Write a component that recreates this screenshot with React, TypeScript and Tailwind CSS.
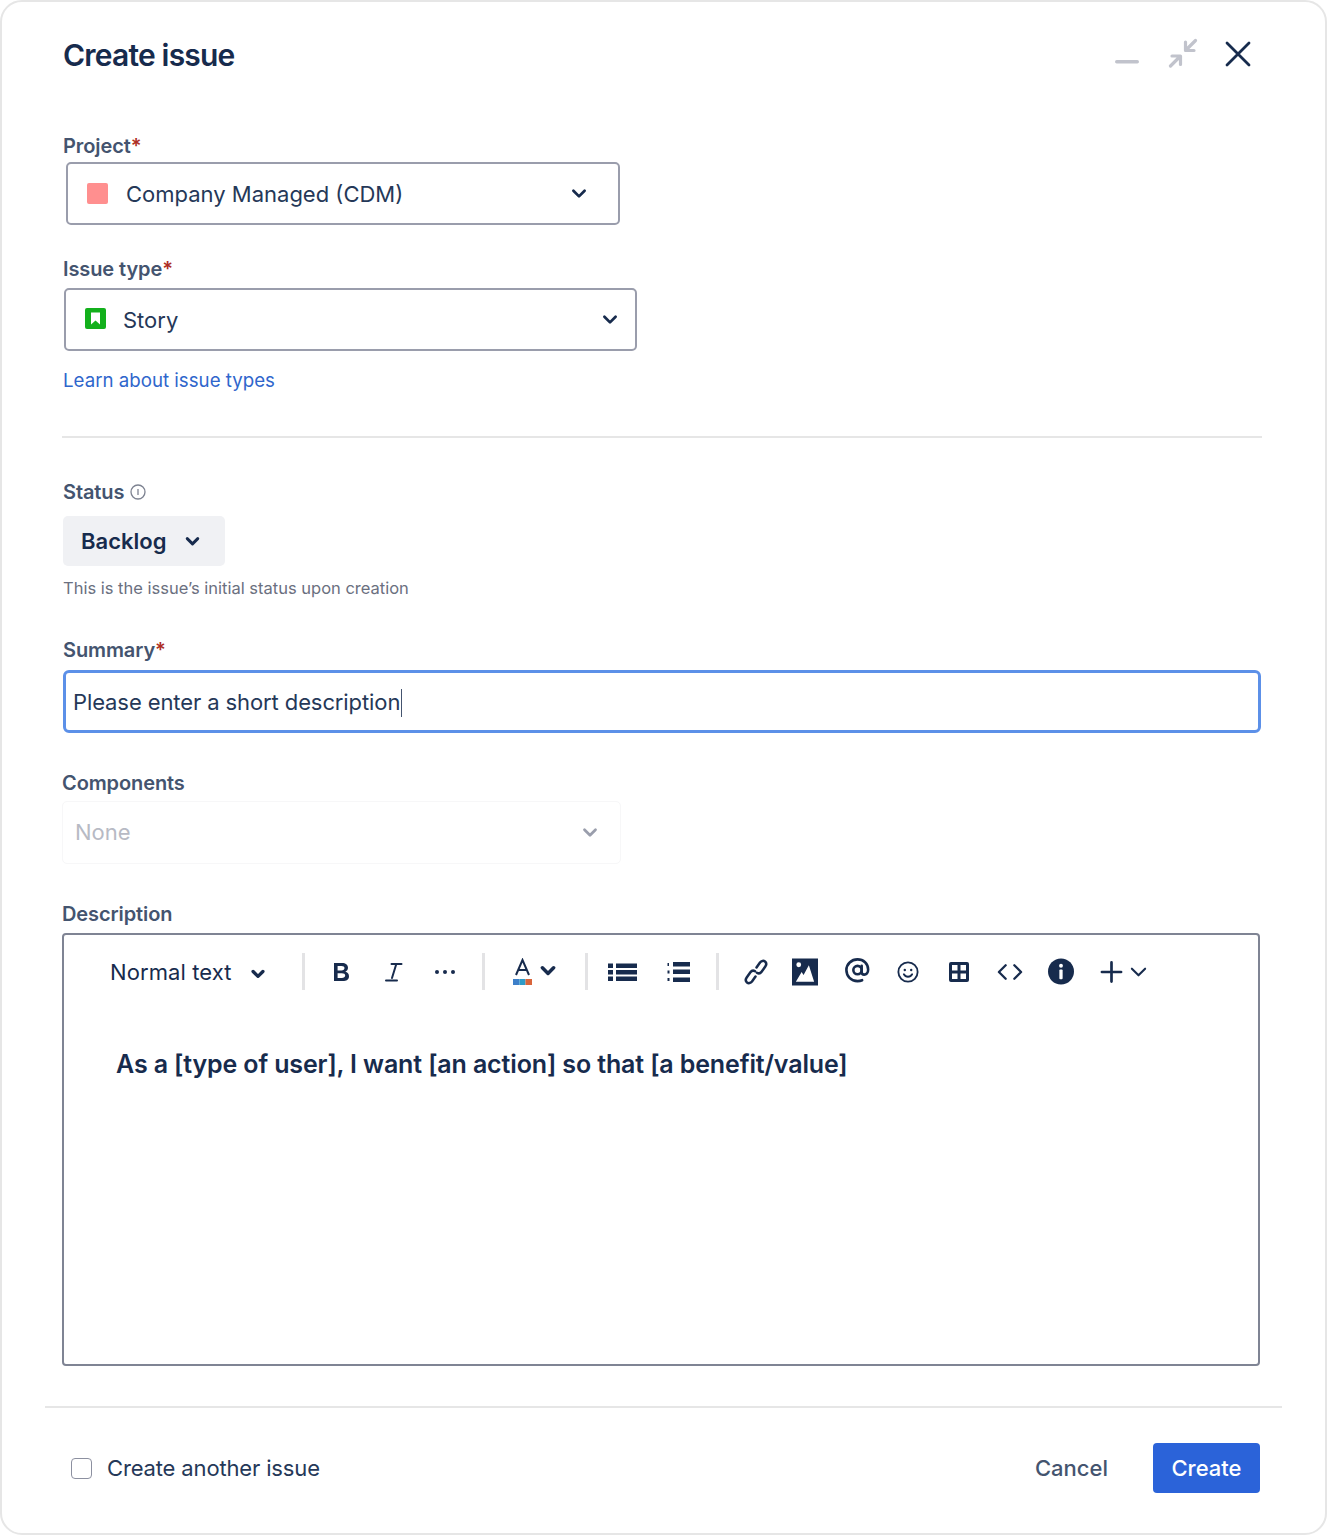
import React from "react";

const navy = "#172B4D";

function Chevron({ w = 14, sw = 3 }: { w?: number; sw?: number }) {
  return (
    <svg width={w} height={w * 0.7} viewBox="0 0 14 10" fill="none" stroke={navy} strokeWidth={sw * 14 / w} strokeLinecap="round" strokeLinejoin="round">
      <path d="M2 2.500 7 7.500l5-5" />
    </svg>
  );
}

function Label({ children, req }: { children: React.ReactNode; req?: boolean }) {
  return (
    <div className="h-6 pb-px flex items-center text-[20px] leading-6 font-semibold text-[#44546F] tracking-[-0.1px]">
      {children}
      {req && <span className="text-[#AE2E24]">*</span>}
    </div>
  );
}

function Sep({ ml }: { ml: string }) {
  return <div className={`w-[3px] h-[37px] bg-[#E3E3E5] shrink-0 ${ml}`} />;
}

function Toolbar() {
  return (
    <div className="h-[37px] flex items-center pl-[46px] mt-[18px]">
      <span className="text-[22px] leading-7 tracking-[0.1px] text-[#172B4D] w-[122px] whitespace-nowrap">Normal text</span>
      <div className="ml-[19px] mt-1 shrink-0"><Chevron w={14} sw={3.4} /></div>
      <Sep ml="ml-[37px]" />
      <svg className="ml-[28px] shrink-0" width="17" height="20" viewBox="0 0 17 20" fill={navy}>
        <path fillRule="evenodd" d="M1 1h8c3.600 0 6 1.700 6 4.800 0 1.900-1.100 3.300-2.700 3.900 2.200.5 3.700 2.100 3.700 4.500 0 3.300-2.600 4.800-6.200 4.800H1V1Zm3.600 3v4.400h3.900c1.900 0 3-.8 3-2.300 0-1.400-1.100-2.100-3-2.100H4.600Zm0 7.300V16h4.200c2 0 3.400-.8 3.400-2.400 0-1.500-1.400-2.300-3.400-2.300H4.600Z" />
      </svg>
      <svg className="ml-[35px] shrink-0" width="18" height="20" viewBox="0 0 18 20" fill="none" stroke={navy} strokeWidth="2" strokeLinecap="round">
        <path d="M6.500 2h10M11.300 2 7 16M1 18.500h11" />
      </svg>
      <svg className="ml-[31px] shrink-0" width="22" height="6" viewBox="0 0 22 6" fill={navy}>
        <circle cx="3" cy="3" r="2" />
        <circle cx="11" cy="3" r="2" />
        <circle cx="19" cy="3" r="2" />
      </svg>
      <Sep ml="ml-[26px]" />
      <svg className="ml-[27px] shrink-0" width="21" height="27" viewBox="0 0 21 27">
        <path d="M4 17 10.500 2 17 17M6.200 12h8.600" fill="none" stroke={navy} strokeWidth="2" />
        <rect x="1" y="21" width="6.500" height="6" fill="#3D7FC9" />
        <rect x="7.500" y="21" width="6" height="6" fill="#2D9CC8" />
        <rect x="13.500" y="21" width="6.500" height="6" fill="#D9653B" />
      </svg>
      <div className="ml-[7px] shrink-0 mb-0.5"><Chevron w={16} sw={3.6} /></div>
      <Sep ml="ml-[29px]" />
      <svg className="ml-[20px] shrink-0" width="30" height="20" viewBox="0 0 30 20" fill={navy}>
        <rect x="0" y="1.500" width="5" height="4.500" />
        <rect x="0" y="8" width="5" height="4.500" />
        <rect x="0" y="14.500" width="5" height="4.500" />
        <rect x="8" y="1.500" width="21" height="4.500" />
        <rect x="8" y="8" width="21" height="4.500" />
        <rect x="8" y="14.500" width="21" height="4.500" />
      </svg>
      <svg className="ml-[29px] shrink-0" width="24" height="24" viewBox="0 0 24 24" fill={navy}>
        <rect x="0.500" y="3" width="1.500" height="3" />
        <rect x="0.500" y="10.500" width="2" height="3" />
        <rect x="0.500" y="18" width="2" height="3" />
        <rect x="6" y="2" width="17" height="4.500" />
        <rect x="6" y="9.500" width="17" height="4.500" />
        <rect x="6" y="17.500" width="17" height="4.500" />
      </svg>
      <Sep ml="ml-[25px]" />
      <svg className="ml-[25px] shrink-0" width="24" height="26" viewBox="0 0 24 26" fill="none" stroke={navy} strokeWidth="2.500" strokeLinecap="round">
        <path d="M12.500 8.500 16 3.500c1.400-1.800 3.600-2.100 5-1 1.400 1.200 1.500 3.300.3 5l-3.700 5.200c-1.300 1.800-3.200 2-4.700 1" />
        <path d="M11.500 17.500 8 22.500c-1.400 1.800-3.600 2.100-5 1-1.400-1.200-1.500-3.300-.3-5l3.700-5.200c1.300-1.800 3.200-2 4.700-1" />
      </svg>
      <svg className="ml-[24px] shrink-0" width="26" height="28" viewBox="0 0 27 28" fill={navy}>
        <path fillRule="evenodd" d="M0 0h27v28H0V0Zm7 4a2.500 2.500 0 1 0 0 5 2.500 2.500 0 0 0 0-5Zm10.500 3L12 17l-2-3-6 10h19L17.500 7Z" />
      </svg>
      <svg className="ml-[27px] mb-[3px] shrink-0" width="25" height="25" viewBox="0 0 27 27" fill="none" stroke={navy} strokeWidth="2.800" strokeLinecap="round">
        <circle cx="13.500" cy="13" r="4.500" />
        <path d="M18 8.500v6.500c0 2 1 3 2.700 3 2.300 0 4.300-2 4.300-5.500C25 6 20 1.500 13.500 1.500S1.500 6.500 1.500 13s5 12 12 12c2 0 3.500-.3 5-1" />
      </svg>
      <svg className="ml-[27px] shrink-0" width="22" height="22" viewBox="0 0 24 24" fill="none" stroke={navy} strokeWidth="2">
        <circle cx="12" cy="12" r="10.500" />
        <circle cx="8.500" cy="9.800" r="1.300" fill={navy} stroke="none" />
        <circle cx="15.500" cy="9.800" r="1.300" fill={navy} stroke="none" />
        <path d="M7.500 14.500c1 1.800 2.700 2.700 4.500 2.700s3.500-.9 4.500-2.700" strokeLinecap="round" />
      </svg>
      <svg className="ml-[30px] shrink-0" width="20" height="20" viewBox="0 0 20 20" fill={navy}>
        <path fillRule="evenodd" d="M2 0h16a2 2 0 0 1 2 2v16a2 2 0 0 1-2 2H2a2 2 0 0 1-2-2V2a2 2 0 0 1 2-2Zm1 3v5.500h5.500V3H3Zm8.500 0v5.500H17V3h-5.500ZM3 11.500V17h5.500v-5.500H3Zm8.500 0V17H17v-5.500h-5.500Z" />
      </svg>
      <svg className="ml-[28px] shrink-0" width="26" height="20" viewBox="0 0 27 20" fill="none" stroke={navy} strokeWidth="2.400" strokeLinecap="round" strokeLinejoin="round">
        <path d="M9 3 2 10l7 7M18 3l7 7-7 7" />
      </svg>
      <svg className="ml-[25px] shrink-0" width="26" height="27" viewBox="0 0 27 27">
        <circle cx="13.500" cy="13.500" r="13.500" fill={navy} />
        <circle cx="13.500" cy="7.500" r="2" fill="#fff" />
        <rect x="11.800" y="11.500" width="3.400" height="10" rx="1" fill="#fff" />
      </svg>
      <svg className="ml-[26px] shrink-0" width="23" height="24" viewBox="0 0 24 24" fill="none" stroke={navy} strokeWidth="2.800" strokeLinecap="round">
        <path d="M12 2v20M2 12h20" />
      </svg>
      <svg className="ml-[7px] shrink-0" width="17" height="12" viewBox="0 0 18 12" fill="none" stroke={navy} strokeWidth="2.200" strokeLinecap="round" strokeLinejoin="round">
        <path d="M2 2.500 9 9.500l7-7" />
      </svg>
    </div>
  );
}

export default function App() {
  return (
    <div className="w-[1327px] h-[1535px] bg-white border-2 border-[#E6E6E6] rounded-[22px] font-['Inter','Liberation_Sans',sans-serif] text-[#172B4D] overflow-hidden flex flex-col">
      <header className="h-[132px] shrink-0 flex justify-between pl-[61px] pr-[74px]">
        <h1 className="mt-[33px] h-10 text-[30px] leading-10 font-semibold tracking-[-0.8px] text-[#172B4D]">Create issue</h1>
        <div className="flex items-start pt-[36px] gap-[27px]">
          <svg className="mt-[22px] mr-[2px]" width="24" height="4" viewBox="0 0 24 4"><rect width="24" height="3.400" rx="1.700" fill="#C1C3CC" /></svg>
          <svg width="30" height="30" viewBox="0 0 30 30" fill="none" stroke="#C1C3CC" strokeWidth="3.200" strokeLinecap="round" strokeLinejoin="round">
            <path d="M27.500 2.500 18 12M17.500 4v8.500H26" />
            <path d="M2.500 28 12 18.500M4 18h8.500v8.500" />
          </svg>
          <svg className="mt-[3px]" width="26" height="26" viewBox="0 0 26 26" fill="none" stroke={navy} strokeWidth="2.800" strokeLinecap="round">
            <path d="M2 2l22 22M24 2 2 24" />
          </svg>
        </div>
      </header>

      <main className="pl-[61px] pr-[65px] flex flex-col">
        <Label req>Project</Label>
        <div className="ml-[3px] mt-[4px] w-[554px] h-[63px] border-2 border-[#9A9DAC] rounded-[5px] flex items-center pl-[19px] pr-[31px]">
          <div className="w-[21px] h-[21px] bg-[#FF8F8F] rounded-[2px] shrink-0" />
          <span className="ml-[18px] text-[22px] leading-8 text-[#253858] whitespace-nowrap">Company Managed (CDM)</span>
          <div className="ml-auto"><Chevron w={16} sw={2.8} /></div>
        </div>

        <div className="mt-[32px]"><Label req>Issue type</Label></div>
        <div className="ml-[1px] mt-[7px] w-[573px] h-[63px] border-2 border-[#9A9DAC] rounded-[5px] flex items-center pl-[19px] pr-[17px]">
          <svg className="-mt-0.5 shrink-0" width="21" height="21" viewBox="0 0 21 21">
            <rect width="21" height="21" rx="2" fill="#13B01C" />
            <path d="M6 4.500h9v12L10.500 12.500 6 16.500v-12Z" fill="#fff" />
          </svg>
          <span className="ml-[17px] text-[22px] leading-8 text-[#253858] whitespace-nowrap">Story</span>
          <div className="ml-auto"><Chevron w={16} sw={2.8} /></div>
        </div>

        <a className="mt-[18px] h-6 text-[18.7px] leading-6 text-[#2F66CC] whitespace-nowrap">Learn about issue types</a>

        <div className="mt-[43px] -ml-px w-[1200px] h-0.5 bg-[#E6E6E6]" />

        <div className="mt-[42px] flex items-center gap-[6px]">
          <Label>Status</Label>
          <svg width="16" height="16" viewBox="0 0 16 16" fill="none" stroke="#7D8291" strokeWidth="1.300">
            <circle cx="8" cy="8" r="7" />
            <path d="M8 5v6" />
          </svg>
        </div>
        <div className="mt-[12px] w-[162px] h-[50px] rounded-[5px] bg-[#F0F1F4] flex items-center pl-[18px]">
          <span className="text-[22px] leading-7 font-semibold text-[#172B4D]">Backlog</span>
          <div className="ml-[19px]"><Chevron w={15} sw={3} /></div>
        </div>
        <p className="mt-[10px] h-6 text-[16.500px] leading-6 text-[#6B7080] whitespace-nowrap">This is the issue’s initial status upon creation</p>

        <div className="mt-[38px]"><Label req>Summary</Label></div>
        <div className="mt-[8px] w-[1198px] h-[63px] border-[3px] border-[#5C90E8] rounded-[6px] flex items-center pl-[7px] pt-0.5 text-[22px] text-[#253858]">
          <span className="whitespace-nowrap tracking-[-0.1px]">Please enter a short description</span>
          <span className="w-px h-[28px] bg-[#44546F] ml-px" />
        </div>

        <div className="mt-[38px] -ml-px"><Label>Components</Label></div>
        <div className="mt-[6px] -ml-px w-[559px] h-[63px] border border-[#F7F7F8] rounded-[5px] flex items-center pl-[12px] pr-[22px]">
          <span className="text-[22px] text-[#B7BAC4]">None</span>
          <div className="ml-auto">
            <svg width="16" height="11" viewBox="0 0 14 10" fill="none" stroke="#9A9EAC" strokeWidth="2.500" strokeLinecap="round" strokeLinejoin="round"><path d="M2 2.500 7 7.500l5-5" /></svg>
          </div>
        </div>

        <div className="mt-[38px] -ml-px"><Label>Description</Label></div>
        <div className="mt-[7px] -ml-px w-[1198px] h-[433px] border-2 border-[#7F8494] rounded-[4px] flex flex-col">
          <Toolbar />
          <p className="mt-[58px] ml-[52px] text-[25px] leading-8 font-semibold text-[#172B4D] tracking-[-0.13px] whitespace-nowrap">As a [type of user], I want [an action] so that [a benefit/value]</p>
        </div>
      </main>

      <div className="mt-[40px] ml-[43px] w-[1237px] h-0.5 bg-[#E6E6E6]" />

      <footer className="mt-[35px] flex items-center pl-[69px] pr-[65px] h-[50px]">
        <div className="w-[21px] h-[21px] border border-[#8C90A0] rounded-[4px] shrink-0" />
        <span className="ml-[15px] text-[22px] text-[#253858] tracking-[-0.15px] whitespace-nowrap">Create another issue</span>
        <span className="ml-auto text-[22px] font-medium text-[#44546F]">Cancel</span>
        <button className="ml-[45px] w-[107px] h-[50px] rounded-[4px] bg-[#2B63D9] text-white text-[22px] font-medium">Create</button>
      </footer>
    </div>
  );
}
